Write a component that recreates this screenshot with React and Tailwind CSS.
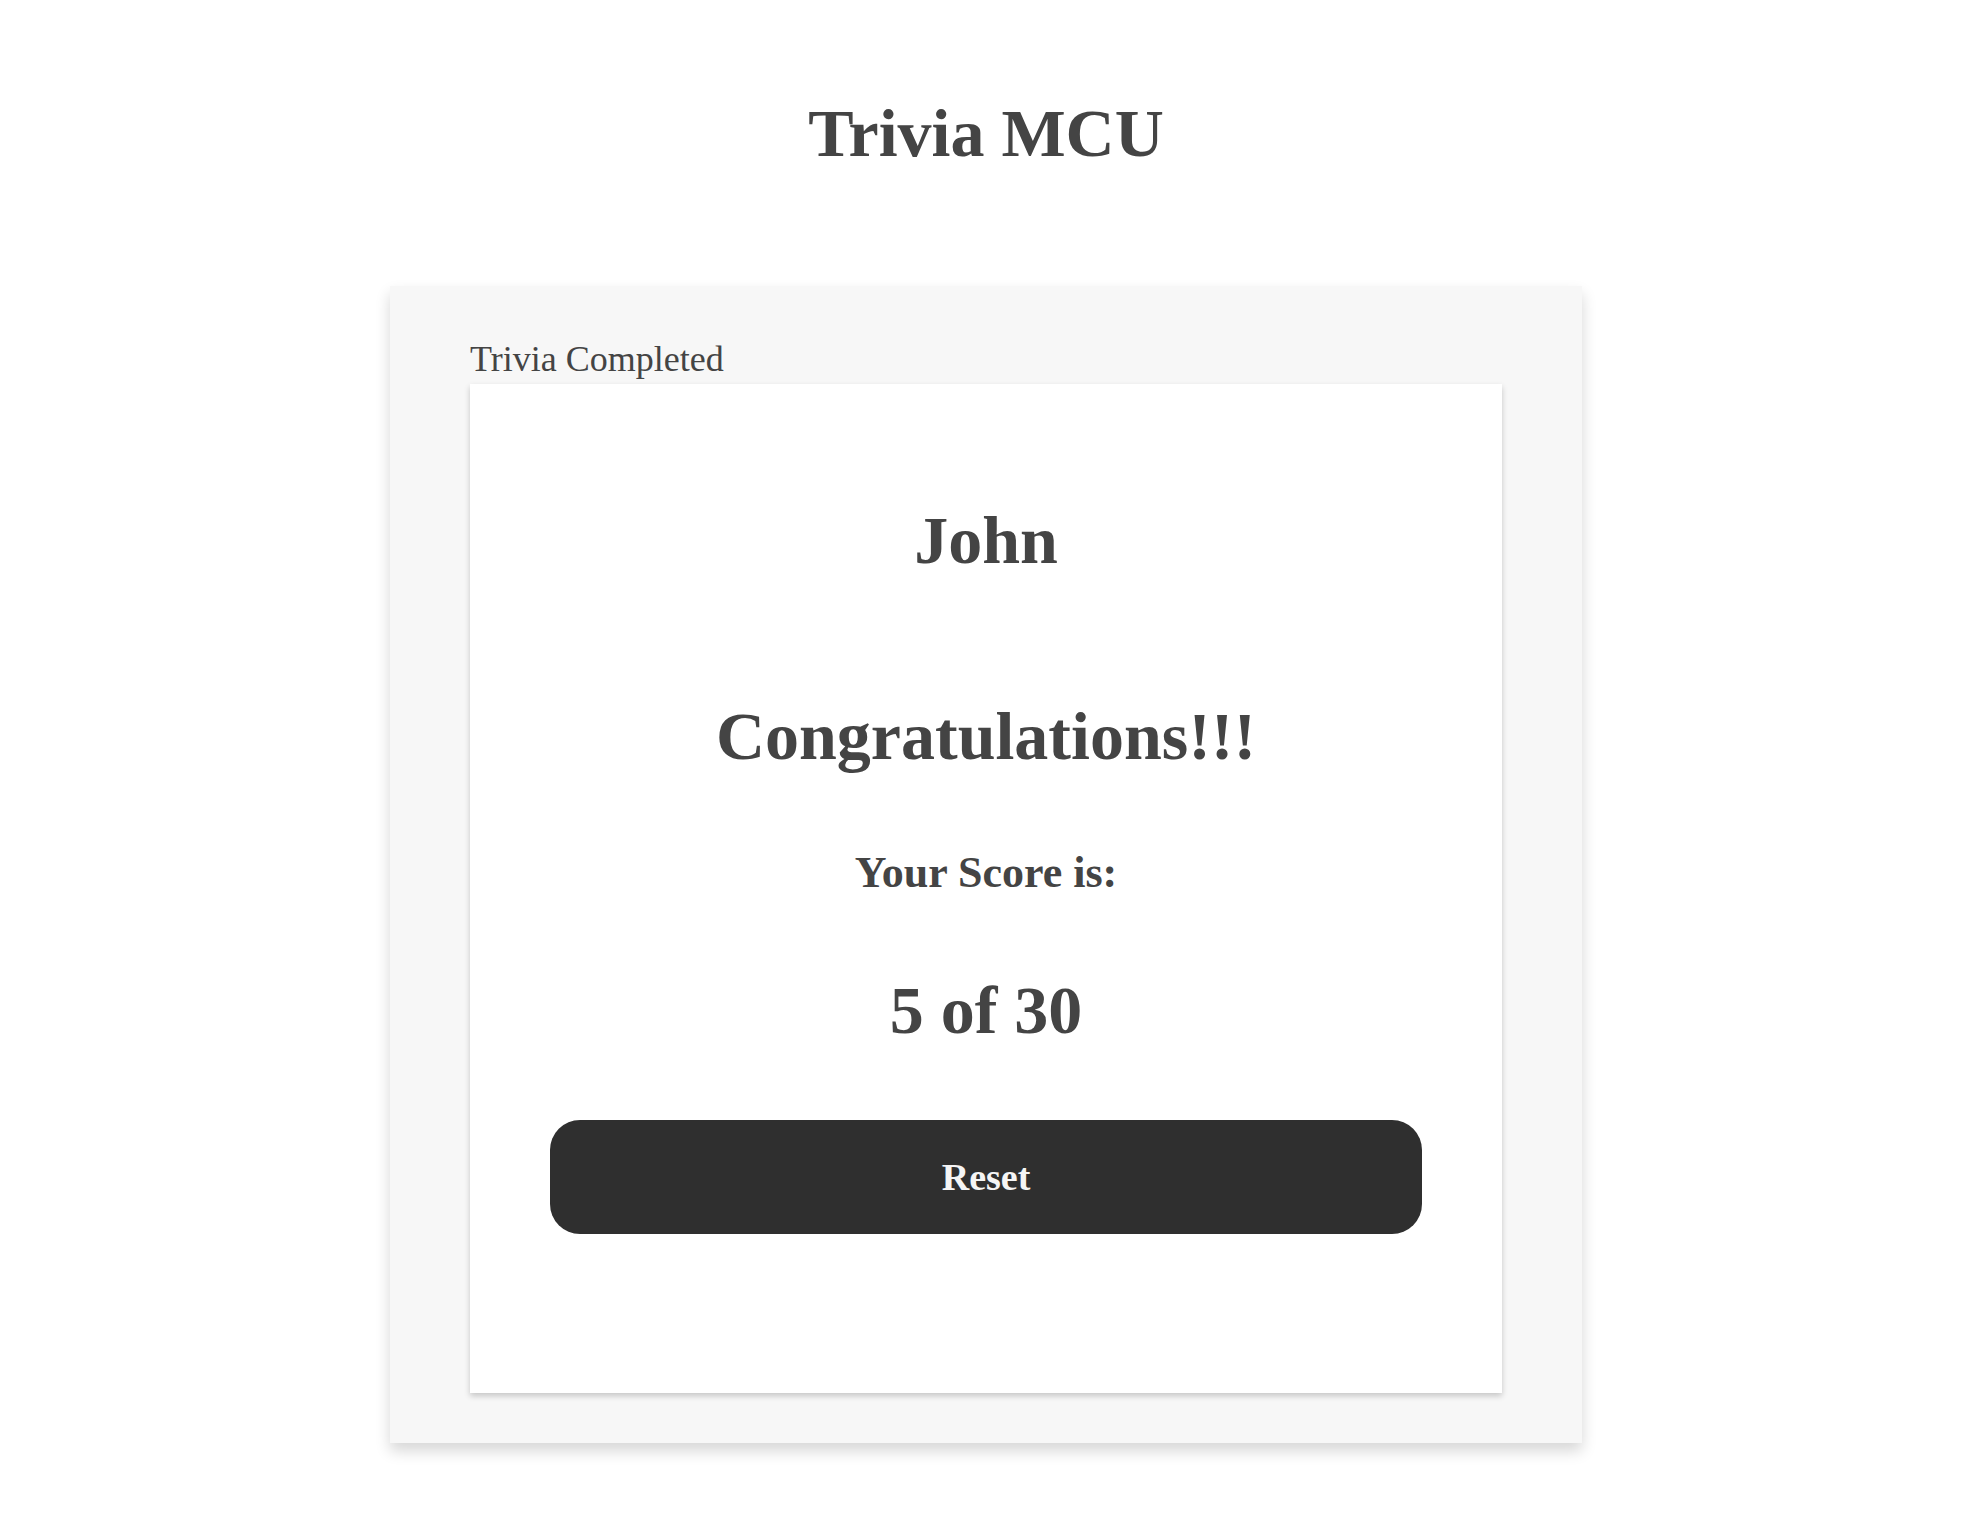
function App() {
  const player = "John";
  const score = 5;
  const total = 30;

  return (
    <div className="min-h-screen bg-white pl-[6px] font-['Liberation_Serif','Times_New_Roman',serif] text-[#444444]">
      <div className="flex flex-col items-center">
        <h1 className="mt-[99px] text-[68px] font-bold leading-none">
          Trivia MCU
        </h1>

        {/* Outer panel */}
        <div className="mt-[119px] w-[1192px] bg-[#f7f7f7] px-[80px] pt-[55px] pb-[50px] shadow-[0_8px_14px_rgba(0,0,0,0.16)]">
          <div className="text-[36px] leading-none">Trivia Completed</div>

          {/* Result card */}
          <div className="mt-[7px] flex h-[1009px] flex-col items-center bg-white px-[80px] pt-[122px] shadow-[0_3px_6px_rgba(0,0,0,0.2)]">
            <h2 className="text-[68px] font-bold leading-none">{player}</h2>

            <h2 className="mt-[128px] text-[68px] font-bold leading-none">
              Congratulations!!!
            </h2>

            <h3 className="mt-[81px] text-[44px] font-bold leading-none">
              Your Score is:
            </h3>

            <div className="mt-[81px] text-[68px] font-bold leading-none">
              {score} of {total}
            </div>

            <button className="mt-[76px] flex h-[114px] w-full items-center justify-center rounded-[30px] bg-[#2f2f2f] text-[38px] font-bold text-[#f5f5f5]">
              Reset
            </button>
          </div>
        </div>
      </div>
    </div>
  );
}

export default App;
